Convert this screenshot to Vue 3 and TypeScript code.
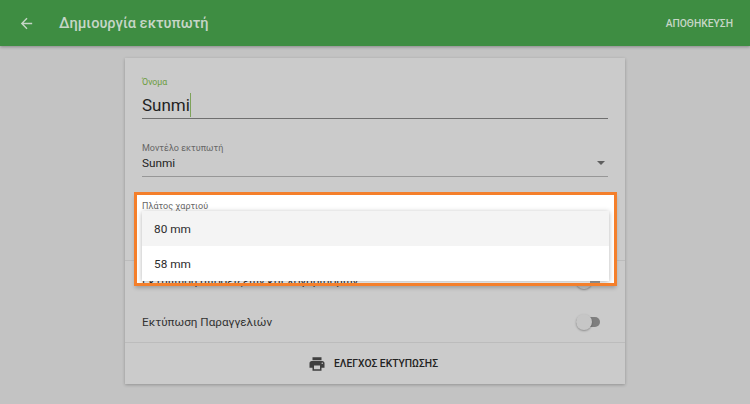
<script setup lang="ts">
const options: string[] = ['80 mm', '58 mm']
</script>

<template>
  <div class="page">
    <header class="bar">
      <svg class="back" viewBox="0 0 24 24"><path d="M20 11H7.83l5.59-5.59L12 4l-8 8 8 8 1.41-1.41L7.83 13H20v-2z" fill="currentColor" /></svg>
      <h1 class="title">Δημιουργία εκτυπωτή</h1>
      <span class="save">ΑΠΟΘΗΚΕΥΣΗ</span>
    </header>
    <main class="main">
      <section class="card">
        <div class="fields">
          <div class="field name">
            <label class="name-label">Όνομα</label>
            <div class="name-value">Sunmi<i class="caret"></i></div>
          </div>
          <div class="field model">
            <label class="small-label">Μοντέλο εκτυπωτή</label>
            <div class="select-value">Sunmi<i class="arrow"></i></div>
          </div>
        </div>
        <div class="toggles">
          <div class="row">
            <span>Εκτύπωση αποδείξεων και λογαριασμών</span>
            <i class="switch"></i>
          </div>
          <div class="row">
            <span>Εκτύπωση Παραγγελιών</span>
            <i class="switch"></i>
          </div>
        </div>
        <div class="test">
          <svg viewBox="0 0 24 24"><path d="M19 8H5c-1.66 0-3 1.34-3 3v6h4v4h12v-4h4v-6c0-1.66-1.34-3-3-3zm-3 11H8v-5h8v5zm3-7c-.55 0-1-.45-1-1s.45-1 1-1 1 .45 1 1-.45 1-1 1zm-1-9H6v4h12V3z" fill="currentColor" /></svg>
          <span>ΕΛΕΓΧΟΣ ΕΚΤΥΠΩΣΗΣ</span>
        </div>
      </section>
    </main>
    <div class="highlight">
      <label class="small-label hl-label">Πλάτος χαρτιού</label>
      <span class="hl-row">Εκτύπωση αποδείξεων και λογαριασμών</span>
      <i class="hl-track"></i>
      <ul class="menu">
        <li v-for="(o, i) in options" :key="o" :class="{ active: i === 0 }">{{ o }}</li>
      </ul>
    </div>
  </div>
</template>

<style>
html, body { margin: 0; padding: 0; }
</style>

<style scoped>
.page {
  position: relative;
  width: 750px;
  height: 404px;
  overflow: hidden;
  background: #c3c3c3;
  font-family: Roboto, "Noto Sans", sans-serif;
  color: #232323;
}
.bar {
  display: flex;
  align-items: center;
  height: 46px;
  padding: 0 17px 0 18px;
  box-sizing: border-box;
  background: #3e8d42;
  color: #c6d6c7;
  box-shadow: 0 1px 3px rgba(0, 0, 0, 0.3);
  position: relative;
}
.back { flex: none; width: 17px; height: 17px; margin-right: 24px; }
.title { margin: 0; flex: 1; font-size: 14.6px; font-weight: 500; }
.save { font-size: 10.3px; font-weight: 500; }
.main { display: flex; justify-content: center; padding-top: 12px; }
.card {
  width: 500px;
  height: 326px;
  background: #cbcbcb;
  box-shadow: 0 1px 3px rgba(0, 0, 0, 0.25);
  display: flex;
  flex-direction: column;
}
.fields { padding: 0 17px; height: 202px; box-sizing: border-box; flex: none; }
.field { position: relative; }
.name { height: 61px; padding-top: 19px; box-sizing: border-box; border-bottom: 1px solid #6f6f6f; }
.name-label { display: block; font-size: 8.8px; line-height: 10px; color: #6b9c3e; }
.name-value { font-size: 17px; line-height: 24px; margin-top: 6px; color: #1f1f1f; }
.caret { display: inline-block; width: 1px; height: 24px; background: #7ea35a; vertical-align: -6px; }
.model { height: 36px; margin-top: 22px; padding-top: 1px; box-sizing: border-box; border-bottom: 1px solid #979797; }
.small-label { display: block; font-size: 9px; line-height: 12px; color: #666; }
.select-value { position: relative; font-size: 11.8px; line-height: 16px; margin-top: 1px; color: #232323; }
.arrow {
  position: absolute;
  right: 3px;
  top: 6px;
  border-left: 4px solid transparent;
  border-right: 4px solid transparent;
  border-top: 4px solid #5f5f5f;
}
.toggles { flex: 1; border-top: 1px solid #bcbcbc; display: flex; flex-direction: column; }
.row {
  flex: 1;
  display: flex;
  align-items: center;
  justify-content: space-between;
  padding: 0 25px 0 17px;
  font-size: 11.7px;
  color: #333;
}
.switch {
  position: relative;
  display: block;
  width: 24px;
  height: 10px;
  border-radius: 5px;
  background: #7f7f7f;
}
.switch::before {
  content: "";
  position: absolute;
  left: 0;
  top: -3px;
  width: 16px;
  height: 16px;
  border-radius: 50%;
  background: #c6c6c6;
  box-shadow: 0 1px 2px rgba(0, 0, 0, 0.3);
}
.test {
  height: 42px;
  flex: none;
  display: flex;
  align-items: center;
  justify-content: center;
  gap: 8px;
  box-sizing: border-box;
  border-top: 1px solid #bcbcbc;
  padding-right: 4px;
  font-size: 10.3px;
  font-weight: 500;
  color: #232323;
}
.test svg { width: 18px; height: 18px; color: #3f3f3f; }
.highlight {
  position: absolute;
  left: 134px;
  top: 192px;
  width: 483px;
  height: 94px;
  box-sizing: border-box;
  border: 3px solid #f47f2b;
  background: #fff;
  overflow: hidden;
  box-shadow: 0 3px 4px -1px rgba(0, 0, 0, 0.22);
}
.hl-label { position: absolute; left: 5px; top: 5px; }
.hl-row {
  position: absolute;
  left: 5px;
  top: 79px;
  font-size: 11.7px;
  line-height: 14px;
  white-space: nowrap;
  color: #333;
}
.hl-track {
  position: absolute;
  left: 453px;
  top: 81px;
  width: 10px;
  height: 10px;
  background: #9e9e9e;
}
.menu {
  position: absolute;
  left: 5px;
  top: 16px;
  width: 467px;
  margin: 0;
  padding: 0;
  list-style: none;
  background: #fff;
  box-shadow: 0 1px 5px rgba(0, 0, 0, 0.3);
}
.menu li {
  height: 35px;
  line-height: 37px;
  padding-left: 12px;
  font-size: 11.8px;
  color: #2c2c2c;
}
.menu li.active { background: #f4f4f4; }
</style>
